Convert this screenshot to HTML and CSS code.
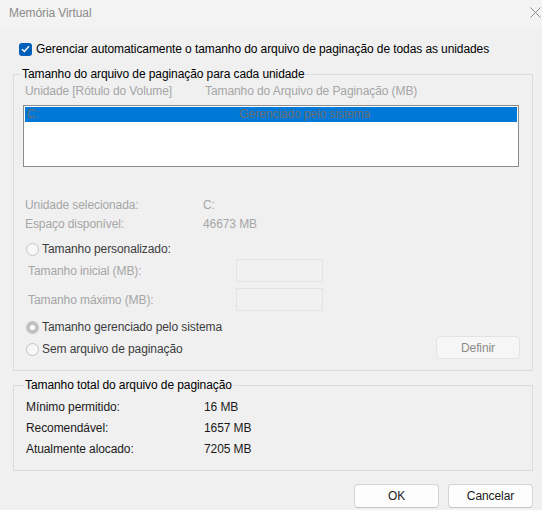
FILE: index.html
```html
<!DOCTYPE html>
<html lang="pt-BR">
  <head>
    <meta charset="UTF-8" />
    <title>Memória Virtual</title>
    <link rel="stylesheet" href="styles.css">
  </head>
  <body>
    <div class="window">
      <!-- barra de titulo -->
      <div class="titlebar">
        <span class="title">Memória Virtual</span>
        <svg class="close" width="11" height="11" viewBox="0 0 11 11">
          <path d="M0.5 0.5 L10.5 10.5 M10.5 0.5 L0.5 10.5" stroke="#8a8a8a" stroke-width="1" fill="none" />
        </svg>
      </div>

      <div class="content">
        <label class="auto-row">
          <span class="checkbox">
            <svg width="9" height="8" viewBox="0 0 9 8">
              <path d="M1 4.2 L3.4 6.5 L8 1.3" stroke="#fff" stroke-width="1.3" fill="none" />
            </svg>
          </span>
          Gerenciar automaticamente o tamanho do arquivo de paginação de todas as unidades
        </label>

        <!-- grupo por unidade -->
        <fieldset class="group group-drives">
          <legend>Tamanho do arquivo de paginação para cada unidade</legend>
          <div class="list-head">
            <span class="col-drive">Unidade [Rótulo do Volume]</span>
            <span>Tamanho do Arquivo de Paginação (MB)</span>
          </div>
          <div class="listbox">
            <div class="list-row selected">
              <span class="col-drive">C:</span>
              <span class="col-size">Gerenciado pelo sistema</span>
            </div>
          </div>

          <div class="info-row first">
            <span class="info-label">Unidade selecionada:</span>
            <span>C:</span>
          </div>
          <div class="info-row">
            <span class="info-label">Espaço disponível:</span>
            <span>46673 MB</span>
          </div>

          <div class="radio-row custom">
            <span class="radio"></span>
            Tamanho personalizado:
          </div>
          <div class="size-row">
            <span class="size-label">Tamanho inicial (MB):</span>
            <span class="textbox"></span>
          </div>
          <div class="size-row second">
            <span class="size-label">Tamanho máximo (MB):</span>
            <span class="textbox"></span>
          </div>
          <div class="radio-row managed">
            <span class="radio checked"></span>
            Tamanho gerenciado pelo sistema
          </div>
          <div class="last-row">
            <div class="radio-row">
              <span class="radio"></span>
              Sem arquivo de paginação
            </div>
            <button class="btn btn-set">Definir</button>
          </div>
        </fieldset>

        <!-- total -->
        <fieldset class="group group-total">
          <legend>Tamanho total do arquivo de paginação</legend>
          <div class="total-row">
            <span class="total-label">Mínimo permitido:</span>
            <span>16 MB</span>
          </div>
          <div class="total-row">
            <span class="total-label">Recomendável:</span>
            <span>1657 MB</span>
          </div>
          <div class="total-row">
            <span class="total-label">Atualmente alocado:</span>
            <span>7205 MB</span>
          </div>
        </fieldset>

        <div class="actions">
          <button class="btn">OK</button>
          <button class="btn">Cancelar</button>
        </div>
      </div>
    </div>
  </body>
</html>
```

FILE: styles.css
```css
* {
  box-sizing: border-box;
}
body {
  margin: 0;
  font-family: "Liberation Sans", Arial, sans-serif;
  font-size: 12px;
  letter-spacing: -0.09px;
  color: #1a1a1a;
  background-color: #f0f0f0;
}
.window {
  width: 542px;
  height: 510px;
  background-color: #f0f0f0;
}
.titlebar {
  height: 28px;
  display: flex;
  align-items: center;
  justify-content: space-between;
  padding: 0 1px 3px 9px;
  background-color: #f3f3f3;
}
.title {
  color: #8b8b8b;
}
.content {
  padding: 0 9px 0 13px;
}
.auto-row {
  display: flex;
  align-items: center;
  height: 16px;
  margin-top: 13px;
  margin-left: 6px;
  gap: 4px;
  color: #000;
}
.checkbox {
  width: 13px;
  height: 13px;
  border-radius: 3px;
  background-color: #005fb8;
  display: flex;
  align-items: center;
  justify-content: center;
}

/* group boxes */
.group {
  margin: 0;
  border: 1px solid #dcdcdc;
  padding: 0 12px 0 9px;
}
.group legend {
  padding: 0 1px;
  margin-left: -2px;
  color: #000;
  line-height: 16px;
}
.group-drives {
  margin-top: 9px;
  height: 305px;
}
.list-head {
  display: flex;
  height: 16px;
  line-height: 16px;
  margin-top: 1px;
  padding-left: 2px;
  color: #a6a6a6;
}
.col-drive {
  width: 180px;
}
.listbox {
  margin-top: 6px;
  height: 62px;
  margin-right: 1px;
  border: 1px solid #8d8d8d;
  background-color: #fff;
  padding: 1px;
}
.list-row {
  display: flex;
  height: 15px;
  line-height: 15px;
  color: #6e6e6e;
}
.list-row.selected {
  background-color: #0078d7;
}
.list-row .col-drive {
  width: auto;
  padding-left: 2px;
}
.col-size {
  flex: 1;
  text-align: center;
  padding-left: 54px;
}

.info-row {
  display: flex;
  height: 16px;
  line-height: 16px;
  margin-top: 3px;
  padding-left: 2px;
  color: #a6a6a6;
}
.info-row.first {
  margin-top: 30px;
}
.info-label {
  width: 178px;
}
.radio-row {
  display: flex;
  align-items: center;
  gap: 3px;
  height: 16px;
  padding-left: 3px;
  color: #3c3c3c;
}
.radio-row.custom {
  margin-top: 9px;
}
.radio-row.managed {
  margin-top: 8px;
}
.radio {
  width: 13px;
  height: 13px;
  border-radius: 50%;
  border: 1px solid #c4c4c4;
  background-color: #f7f7f7;
}
.radio.checked {
  border: 4px solid #c2c2c2;
  background-color: #fff;
}
.size-row {
  display: flex;
  align-items: center;
  height: 23px;
  margin-top: 2px;
  padding-left: 5px;
  color: #a6a6a6;
}
.size-row.second {
  margin-top: 6px;
}
.size-label {
  width: 208px;
}
.textbox {
  width: 87px;
  height: 23px;
  border: 1px solid #e3e3e3;
  background-color: #f0f0f0;
}
.last-row {
  display: flex;
  align-items: center;
  justify-content: space-between;
  height: 23px;
  margin-top: 1px;
}
.last-row .radio-row {
  margin-top: 3px;
}

.btn {
  font-family: "Liberation Sans", Arial, sans-serif;
  font-size: 12px;
  letter-spacing: -0.09px;
  background-color: #fdfdfd;
  border: 1px solid #d4d4d4;
  border-bottom-color: #c4c4c4;
  border-radius: 4px;
  color: #1a1a1a;
  padding: 0;
}
.btn-set {
  width: 84px;
  height: 23px;
  color: #8c8c8c;
  background-color: #f6f6f6;
  border-color: #e3e3e3;
}

.group-total {
  margin-top: 6px;
  height: 94px;
  padding-left: 12px;
}
.total-row {
  display: flex;
  height: 16px;
  line-height: 16px;
  margin-top: 5px;
  color: #1a1a1a;
}
.total-row:first-of-type {
  margin-top: 6px;
}
.total-label {
  width: 178px;
}

.actions {
  display: flex;
  justify-content: flex-end;
  gap: 9px;
  margin-top: 13px;
}
.actions .btn {
  width: 85px;
  height: 24px;
}
```
